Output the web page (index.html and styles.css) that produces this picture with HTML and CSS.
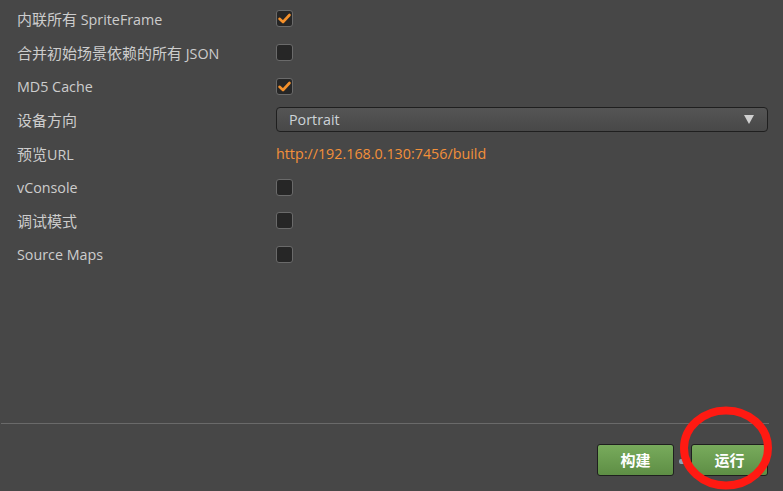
FILE: index.html
```html
<!DOCTYPE html>
<html lang="zh">
<head>
<meta charset="utf-8">
<link rel="stylesheet" href="styles.css">
</head>
<body>
<div class="page">
  <div class="form">
    <div class="row"><span class="label"><span class="cjk">内联所有</span> SpriteFrame</span><span class="box checked"><svg viewBox="0 0 17 17" width="17" height="17"><path d="M3.5 8.8 L7 12 L13.5 5" fill="none" stroke="#f5912b" stroke-width="2.6" stroke-linecap="round" stroke-linejoin="round"/></svg></span></div>
    <div class="row"><span class="label"><span class="cjk">合并初始场景依赖的所有</span> JSON</span><span class="box"></span></div>
    <div class="row"><span class="label">MD5 Cache</span><span class="box checked"><svg viewBox="0 0 17 17" width="17" height="17"><path d="M3.5 8.8 L7 12 L13.5 5" fill="none" stroke="#f5912b" stroke-width="2.6" stroke-linecap="round" stroke-linejoin="round"/></svg></span></div>
    <div class="row"><span class="label"><span class="cjk">设备方向</span></span><div class="select"><span>Portrait</span><span class="arrow"></span></div></div>
    <div class="row"><span class="label"><span class="cjk">预览</span>URL</span><span class="link">http://192.168.0.130:7456/build</span></div>
    <div class="row"><span class="label">vConsole</span><span class="box"></span></div>
    <div class="row"><span class="label"><span class="cjk">调试模式</span></span><span class="box"></span></div>
    <div class="row"><span class="label">Source Maps</span><span class="box"></span></div>
  </div>
  <div class="sep"></div>
  <div class="footer">
    <button class="btn">构建</button>
    <span class="spin"></span>
    <button class="btn run">运行</button>
  </div>
  <svg class="circle" width="110" height="100" viewBox="0 0 110 100"><ellipse cx="55" cy="50" rx="42" ry="37.5" fill="none" stroke="#ff1a12" stroke-width="8"/></svg>
</div>
</body>
</html>
```
FILE: styles.css
```css
* { box-sizing: border-box; }
html, body { margin: 0; padding: 0; }
body {
  background: #474747;
  font-family: "Open Sans", "Noto Sans CJK SC", sans-serif;
  font-size: 14.3px;
  color: #cdcdcd;
  width: 783px;
  height: 491px;
  overflow: hidden;
}
.page {
  position: relative;
  height: 491px;
  display: flex;
  flex-direction: column;
}
.form {
  padding-top: 2px;
  flex: 1;
  display: flex;
  flex-direction: column;
}
.row {
  height: 33.7px;
  display: flex;
  align-items: center;
  padding-left: 17px;
  padding-right: 15px;
}
.label {
  width: 259px;
  flex: none;
  white-space: nowrap;
}
.cjk {
  font-family: "Noto Sans CJK SC", sans-serif;
  font-size: 15px;
}
.box {
  width: 17px;
  height: 17px;
  border: 1px solid #6a6a6a;
  border-radius: 3px;
  background: #262626;
  position: relative;
  display: block;
}
.box svg { position: absolute; left: -1px; top: -1px; }
.select {
  flex: 1;
  height: 25px;
  border: 1px solid #1f1f1f;
  border-radius: 4px;
  background: linear-gradient(#555555, #484848);
  display: flex;
  align-items: center;
  justify-content: space-between;
  padding: 0 13px 0 12px;
  color: #cdd3d8;
}
.arrow {
  width: 0; height: 0;
  border-left: 5px solid transparent;
  border-right: 5px solid transparent;
  border-top: 9px solid #cfcfcf;
}
.link { color: #f3903a; }
.sep {
  height: 1px;
  background: #6a6a6a;
  margin: 0 14px 0 1px;
}
.footer {
  height: 67px;
  display: flex;
  align-items: flex-start;
  justify-content: flex-end;
  padding: 20px 15px 0 0;
}
.btn {
  width: 77px;
  height: 32px;
  border: 1px solid #1f1f1f;
  border-radius: 3px;
  background: linear-gradient(#78ab5c, #5e8e45);
  color: #ffffff;
  font-family: "Noto Sans CJK SC", sans-serif;
  font-weight: bold;
  font-size: 15px;
  padding: 0 0 1px 0;
}
.spin {
  width: 6px;
  height: 5px;
  margin: 15px 6px 0 5px;
  border-radius: 2px;
  background: #8ea3b5;
}
.circle {
  position: absolute;
  left: 671px;
  top: 398px;
}
```
